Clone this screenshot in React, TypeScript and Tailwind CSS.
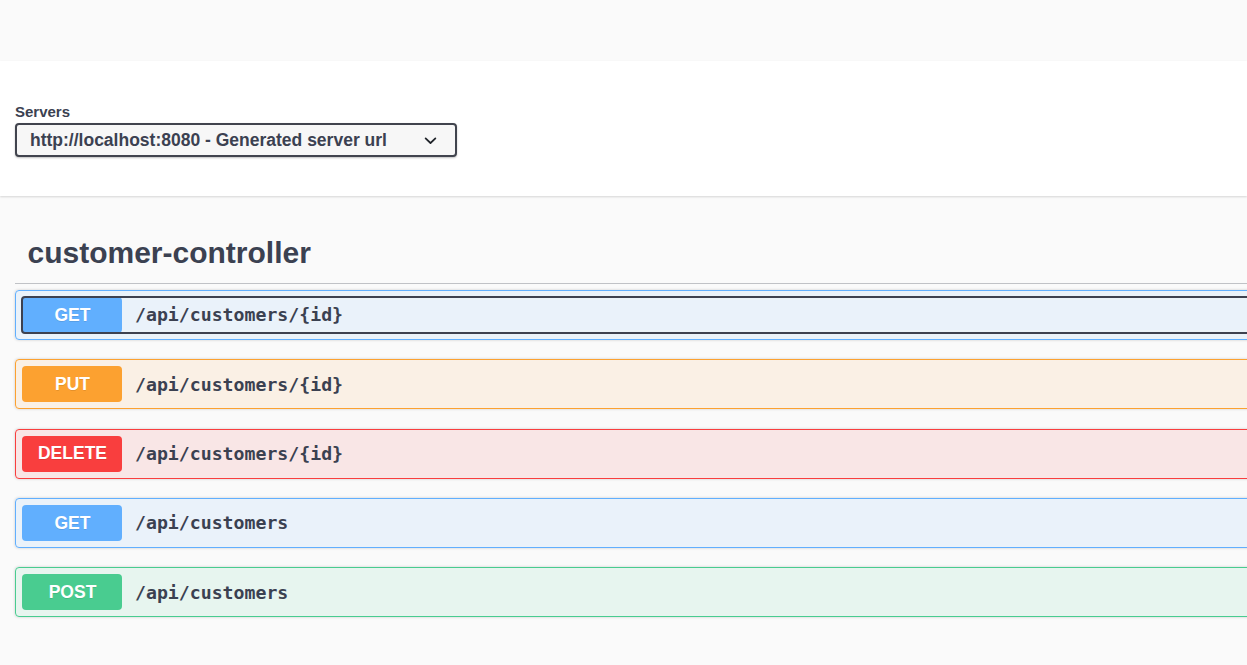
import React from 'react';

interface OpProps {
  method: string;
  path: string;
  block: string;
  badge: string;
  focused?: boolean;
}

const ops: OpProps[] = [
  { method: 'GET', path: '/api/customers/{id}', block: 'border-[#61affe] bg-[rgba(97,175,254,0.1)]', badge: 'bg-[#61affe]', focused: true },
  { method: 'PUT', path: '/api/customers/{id}', block: 'border-[#fca130] bg-[rgba(252,161,48,0.1)]', badge: 'bg-[#fca130]' },
  { method: 'DELETE', path: '/api/customers/{id}', block: 'border-[#f93e3e] bg-[rgba(249,62,62,0.1)]', badge: 'bg-[#f93e3e]' },
  { method: 'GET', path: '/api/customers', block: 'border-[#61affe] bg-[rgba(97,175,254,0.1)]', badge: 'bg-[#61affe]' },
  { method: 'POST', path: '/api/customers', block: 'border-[#49cc90] bg-[rgba(73,204,144,0.1)]', badge: 'bg-[#49cc90]' },
];

const OpBlock: React.FC<OpProps> = ({ method, path, block, badge, focused }) => (
  <div className={`rounded-[4px] border p-[6px] shadow-[0_0_3px_rgba(0,0,0,0.19)] ${block}`}>
    <div
      className={`flex h-[36px] items-center ${
        focused ? 'rounded-[3px] outline-2 -outline-offset-1 outline-[#3d4150]' : ''
      }`}
    >
      <span
        className={`flex h-[36px] w-[100px] items-center justify-center rounded-[4px] pl-px text-[17.5px] font-bold text-white [text-shadow:0_1px_0_rgba(0,0,0,0.1)] ${badge}`}
      >
        {method}
      </span>
      <span className="pl-[13px] font-['DejaVu_Sans_Mono',monospace] text-[18.2px] font-bold text-[#3b4151]">
        {path}
      </span>
    </div>
  </div>
);

export default function App() {
  return (
    <div className="min-h-screen w-full overflow-hidden bg-[#fafafa] font-['Liberation_Sans',Arial,sans-serif] text-[#3b4151]">
      <div className="h-[61px]" />

      {/* Servers */}
      <section className="relative h-[135px] bg-white pl-[15px] pt-[42px] shadow-[0_1px_2px_0_rgba(0,0,0,0.15)]">
        <div className="text-[15px] font-bold leading-[17px]">Servers</div>
        <div className="mt-[3px] flex h-[34px] w-[442px] items-center rounded-[4px] border-2 border-[#41444e] bg-[#f7f7f7] pl-[13px] pr-[12px] shadow-[0_1px_2px_0_rgba(0,0,0,0.25)]">
          <span className="flex-1 text-[17.5px] font-bold leading-[20px]">
            http://localhost:8080 - Generated server url
          </span>
          <svg width="25" height="25" viewBox="0 0 20 20" fill="#1f2329">
            <path d="M13.418 7.859a.695.695 0 01.978 0 .68.68 0 010 .969l-3.908 3.83a.697.697 0 01-.979 0l-3.908-3.83a.68.68 0 010-.969.695.695 0 01.978 0L10 11l3.418-3.141z" />
          </svg>
        </div>
      </section>

      {/* Tag section */}
      <section className="w-[1420px] pl-[15px] pt-[27px]">
        <h3 className="border-b border-[rgba(59,65,81,0.3)] pb-[13px] pl-[12.5px] pt-[12px] text-[30px] font-bold leading-[35px]">
          customer-controller
        </h3>
        <div className="mt-[6px] flex flex-col gap-[19.3px]">
          {ops.map((op, i) => (
            <OpBlock key={i} {...op} />
          ))}
        </div>
      </section>
    </div>
  );
}
